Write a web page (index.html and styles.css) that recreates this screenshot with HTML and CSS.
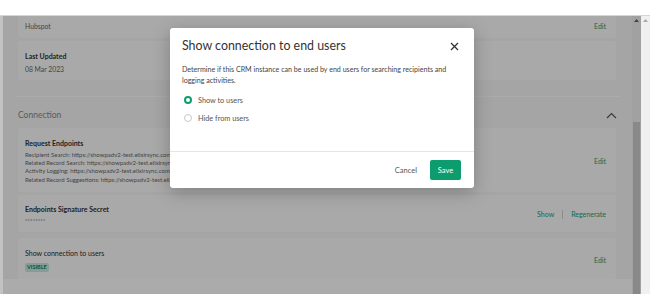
FILE: index.html
```html
<!DOCTYPE html>
<html lang="en">
<head>
    <meta charset="UTF-8">
    <title>CRM Connection</title>
    <link rel="stylesheet" href="styles.css">
</head>
<body>
    <div class="topbar"></div>
    <div class="window">
        <div class="edge"></div>
        <div class="frame">
            <div class="page">
                <div class="card card-type">
                    <div class="card-body">
                        <div class="card-value">Hubspot</div>
                    </div>
                    <div class="actions"><a class="link">Edit</a></div>
                </div>
                <div class="card card-updated">
                    <div class="card-body">
                        <div class="card-title">Last Updated</div>
                        <div class="card-value">08 Mar 2023</div>
                    </div>
                </div>

                <div class="separator"></div>

                <div class="section-head">
                    <span>Connection</span>
                    <svg class="chevron" width="11" height="7" viewBox="0 0 11 7">
                        <path d="M1 6 L5.5 1.5 L10 6" fill="none" stroke="#555" stroke-width="1.2"/>
                    </svg>
                </div>

                <div class="card card-endpoints">
                    <div class="card-body">
                        <div class="card-title">Request Endpoints</div>
                        <div class="url-list">
                            <div>Recipient Search: https://showpadv2-test.elixirsync.com/api/recipients/search</div>
                            <div>Related Record Search: https://showpadv2-test.elixirsync.com/api/records/search</div>
                            <div>Activity Logging: https://showpadv2-test.elixirsync.com/api/activities</div>
                            <div>Related Record Suggestions: https://showpadv2-test.elixirsync.com/api/records/suggest</div>
                        </div>
                    </div>
                    <div class="actions"><a class="link">Edit</a></div>
                </div>

                <div class="card card-secret">
                    <div class="card-body">
                        <div class="card-title">Endpoints Signature Secret</div>
                        <div class="secret">********</div>
                    </div>
                    <div class="actions">
                        <a class="link">Show</a>
                        <span class="pipe"></span>
                        <a class="link">Regenerate</a>
                    </div>
                </div>

                <div class="card card-visible">
                    <div class="card-body">
                        <div class="card-title light">Show connection to users</div>
                        <span class="badge">Visible</span>
                    </div>
                    <div class="actions"><a class="link">Edit</a></div>
                </div>
            </div>

            <div class="scrollbar">
                <svg class="arrow" width="5" height="3" viewBox="0 0 5 3"><polygon points="0,3 2.5,0 5,3" fill="#666"/></svg>
                <div class="thumb"></div>
            </div>

            <div class="backdrop"></div>

            <div class="modal">
                <div class="modal-head">
                    <h2>Show connection to end users</h2>
                    <svg class="close" width="9" height="9" viewBox="0 0 9 9">
                        <path d="M1 1 L8 8 M8 1 L1 8" stroke="#333" stroke-width="1.3"/>
                    </svg>
                </div>
                <p class="modal-text">Determine if this CRM instance can be used by end users for searching recipients and logging activities.</p>
                <div class="options">
                    <label class="option"><span class="radio checked"></span>Show to users</label>
                    <label class="option"><span class="radio"></span>Hide from users</label>
                </div>
                <div class="modal-foot">
                    <button class="btn-cancel">Cancel</button>
                    <button class="btn-save">Save</button>
                </div>
            </div>
        </div>
        <div class="outer-scroll">
            <svg class="arrow" width="5" height="3" viewBox="0 0 5 3"><polygon points="0,3 2.5,0 5,3" fill="#aaa"/></svg>
        </div>
    </div>
</body>
</html>
```

FILE: styles.css
```css
* {
    box-sizing: border-box;
}
body {
    background-color: #FFFFFF;
    font-family: Lato, 'Noto Sans', sans-serif;
    height: 294px;
    margin: 0;
    overflow: hidden;
    width: 650px;
}
.topbar {
    background-color: #FFFFFF;
    border-bottom: 1px solid #d6d6d6;
    height: 16px;
}
.window {
    display: flex;
    height: 278px;
}
.edge {
    background-color: #c2c2c2;
    width: 3px;
}
.frame {
    display: flex;
    overflow: hidden;
    position: relative;
    width: 638px;
}
.page {
    align-self: flex-start;
    background-color: #f7f7f7;
    display: flex;
    flex-direction: column;
    margin-top: -16px;
    padding: 0 16px 0 15px;
    width: 629px;
}
.card {
    align-items: center;
    background-color: #fdfdfd;
    border-radius: 3px;
    display: flex;
    justify-content: space-between;
    padding: 0 10px 0 7px;
}
.card-body {
    align-items: flex-start;
    display: flex;
    flex-direction: column;
}
.card-title {
    color: #333;
    font-size: 7px;
    font-weight: 700;
    line-height: 10px;
}
.card-title.light {
    font-weight: 400;
    color: #2a2a2a;
}
.card-value {
    color: #666;
    font-size: 6.8px;
    line-height: 10px;
}
.card-type {
    padding-top: 21px;
    padding-bottom: 7px;
}
.card-updated {
    margin-top: 3px;
    padding-top: 10px;
    padding-bottom: 6px;
}
.card-updated .card-value {
    margin-top: 3px;
}
.separator {
    background-color: #ffffff;
    height: 1px;
    margin: 16px -4px 0 -3px;
}
.section-head {
    align-items: center;
    color: #888;
    display: flex;
    font-size: 8.5px;
    height: 12px;
    justify-content: space-between;
    margin: 12px 0 7px;
}
.chevron {
    margin-right: -1px;
}
.card-endpoints {
    padding-top: 10px;
    padding-bottom: 8px;
}
.url-list {
    color: #666;
    font-size: 6px;
    line-height: 8.2px;
    margin-top: 3px;
    white-space: nowrap;
}
.card-secret {
    margin-top: 3px;
    padding-top: 9px;
    padding-bottom: 7px;
}
.secret {
    color: #666;
    font-size: 6px;
    line-height: 8px;
    margin-top: 3px;
}
.card-visible {
    margin-top: 6px;
    padding-top: 10px;
    padding-bottom: 7px;
}
.badge {
    background-color: #c8ebdb;
    border-radius: 2px;
    color: #1b7b5c;
    display: block;
    font-size: 5.5px;
    font-weight: 700;
    height: 9px;
    line-height: 9px;
    margin-top: 5px;
    padding: 0 2px;
    text-transform: uppercase;
}
.actions {
    align-items: center;
    display: flex;
    gap: 8px;
}
.link {
    color: #14a07a;
    font-size: 7px;
}
.pipe {
    background-color: #d0d0d0;
    height: 9px;
    width: 1px;
}
.scrollbar {
    align-items: center;
    background-color: #f0f0f0;
    display: flex;
    flex-direction: column;
    width: 9px;
}
.scrollbar .arrow {
    margin-top: 3px;
}
.thumb {
    background-color: #cdcdcd;
    flex: 1;
    margin-top: 100px;
    width: 7px;
}
.outer-scroll {
    background-color: #f0f0f0;
    display: flex;
    justify-content: center;
    width: 9px;
}
.outer-scroll .arrow {
    margin-top: 3px;
}
.backdrop {
    background-color: rgba(0, 0, 0, 0.33);
    inset: 0;
    position: absolute;
}
.modal {
    background-color: #FFFFFF;
    border-radius: 3px;
    box-shadow: 0 4px 18px rgba(0, 0, 0, 0.25);
    height: 160px;
    left: 167px;
    position: absolute;
    top: 12px;
    width: 304px;
}
.modal-head {
    align-items: center;
    display: flex;
    justify-content: space-between;
    padding: 9px 15px 0 12px;
}
.modal-head h2 {
    color: #333;
    font-size: 12.4px;
    font-weight: 400;
    line-height: 18px;
    margin: 0;
}
.modal-text {
    color: #444;
    font-size: 7.1px;
    line-height: 11px;
    margin: 9px 10px 0 12px;
}
.options {
    display: flex;
    flex-direction: column;
    margin-top: 5px;
    padding-left: 14px;
}
.option {
    align-items: center;
    color: #555;
    display: flex;
    font-size: 7.3px;
    height: 18px;
}
.radio {
    border: 1px solid #c8c8c8;
    border-radius: 50%;
    height: 8px;
    margin-right: 6px;
    width: 8px;
}
.radio.checked {
    border: 2.5px solid #0c9c6e;
}
.modal-foot {
    align-items: center;
    border-top: 1px solid #e6e6e6;
    display: flex;
    gap: 13px;
    height: 37px;
    justify-content: flex-end;
    margin-top: 24px;
    padding-right: 13px;
}
.modal-foot button {
    border: none;
    cursor: pointer;
    font-family: inherit;
    font-size: 7.5px;
}
.btn-cancel {
    background: none;
    color: #555;
    padding: 0;
}
.btn-save {
    background-color: #0c9c6e;
    border-radius: 2px;
    color: #FFFFFF;
    height: 20px;
    width: 31px;
}
```
